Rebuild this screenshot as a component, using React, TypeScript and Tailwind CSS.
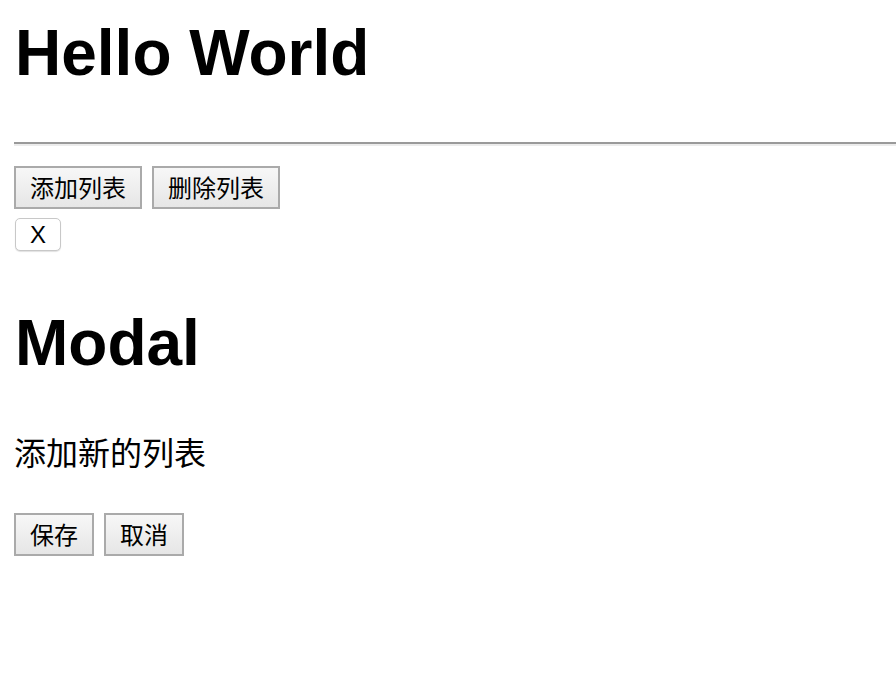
import React from "react";

const cjk = { fontFamily: '"Liberation Sans", "Noto Sans CJK SC", sans-serif' };

function Btn({ children, w }: { children: React.ReactNode; w: string }) {
  return (
    <button
      className={`${w} h-[43px] border-2 border-[#aaaaaa] bg-gradient-to-b from-[#f7f7f7] to-[#e6e6e6] text-[24px] leading-[41px] text-black text-center p-0`}
      style={cjk}
    >
      {children}
    </button>
  );
}

export default function App() {
  return (
    <div className="bg-white min-h-[684px] pl-[14px] pt-[16px] text-black" style={cjk}>
      <h1 className="h-[74px] leading-[74px] text-[64px] font-bold pl-[1px] whitespace-nowrap">Hello World</h1>
      <div className="mt-[52px] h-[4px] border-t-2 border-t-[#9a9a9a] border-b-2 border-b-[#ececec]" />
      <div className="mt-[20px] flex gap-[10px]">
        <Btn w="w-[128px]">添加列表</Btn>
        <Btn w="w-[128px]">删除列表</Btn>
      </div>
      <div className="mt-[9px]">
        <button className="ml-[1px] w-[46px] h-[33px] rounded-[5px] border border-[#c8c8c8] bg-white shadow-[0_1px_1px_rgba(0,0,0,0.12)] text-[24px] leading-[31px] text-center p-0">
          X
        </button>
      </div>
      <h1 className="mt-[55px] h-[74px] leading-[74px] text-[64px] font-bold pl-[1px]">Modal</h1>
      <p className="mt-[54px] text-[32px] leading-[40px]">添加新的列表</p>
      <div className="mt-[39px] flex gap-[10px]">
        <Btn w="w-[80px]">保存</Btn>
        <Btn w="w-[80px]">取消</Btn>
      </div>
    </div>
  );
}
